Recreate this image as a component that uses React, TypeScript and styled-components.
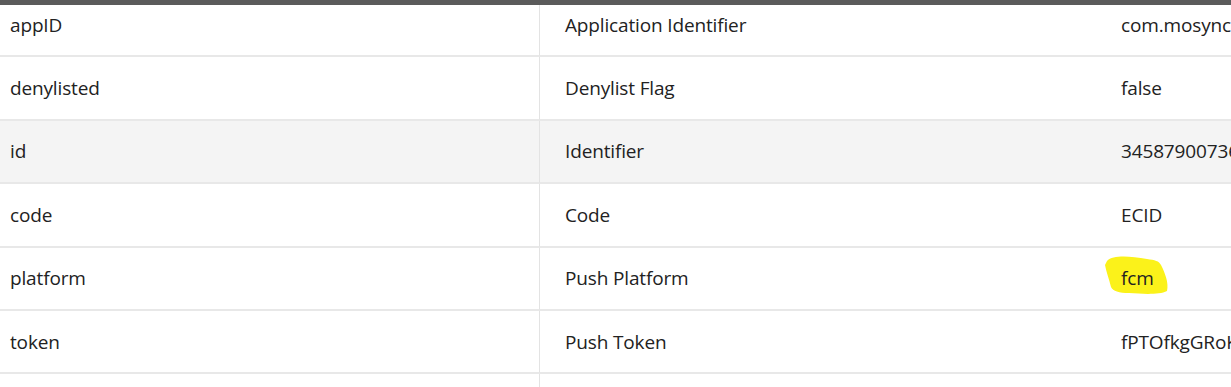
import React from "react";
import styled, { createGlobalStyle } from "styled-components";

const Global = createGlobalStyle`
  html, body {
    margin: 0;
    padding: 0;
    background: #fff;
  }
  body {
    font-family: "Open Sans", "Noto Sans", sans-serif;
    color: #222;
  }
`;

const TopBar = styled.div`
  height: 5px;
  background-color: #5b5b5b;
`;

const Viewport = styled.div`
  height: 382px;
  overflow: hidden;
  position: relative;
`;

const Table = styled.div`
  display: grid;
  grid-template-columns: 539px 557px 400px;
  width: 1496px;
  margin-top: -11px;
`;

const Row = styled.div<{ $hover?: boolean }>`
  display: contents;

  & > div {
    background-color: ${(p) => (p.$hover ? "#f4f4f4" : "#fff")};
  }
`;

const Cell = styled.div<{ $first?: boolean; $divider?: boolean }>`
  height: 61.4px;
  display: flex;
  align-items: center;
  padding-left: ${(p) => (p.$first ? "10px" : "25px")};
  border-bottom: 2px solid #e8e8e8;
  border-left: ${(p) => (p.$divider ? "1px solid #e3e3e3" : "none")};
  font-size: 19px;
  white-space: nowrap;
  overflow: hidden;
  box-sizing: content-box;
  letter-spacing: -0.15px;
`;

const Marker = styled.span`
  position: relative;
  display: inline-block;

  svg {
    position: absolute;
    left: -18px;
    top: -12px;
    z-index: 0;
  }

  span {
    position: relative;
    z-index: 1;
  }
`;

const rows: { key: string; label: string; value: React.ReactNode; hover?: boolean }[] = [
  { key: "appID", label: "Application Identifier", value: "com.mosync.app" },
  { key: "denylisted", label: "Denylist Flag", value: "false" },
  { key: "id", label: "Identifier", value: "34587900736512", hover: true },
  { key: "code", label: "Code", value: "ECID" },
  {
    key: "platform",
    label: "Push Platform",
    value: (
      <Marker>
        <svg width="68" height="44" viewBox="0 0 68 44">
          <path
            d="M4 8 C10 2 26 3 44 6 C52 7 56 8 58 12 C62 20 66 30 64 38 C56 42 40 41 26 40 C16 40 10 38 8 34 C6 26 3 18 2 12 Z"
            fill="#fbf21a"
          />
        </svg>
        <span>fcm</span>
      </Marker>
    ),
  },
  { key: "token", label: "Push Token", value: "fPTOfkgGRoKd7Hx" },
  { key: "", label: "", value: "" },
];

export default function App() {
  return (
    <>
      <Global />
      <TopBar />
      <Viewport>
        <Table>
          {rows.map((r, i) => (
            <Row key={i} $hover={r.hover}>
              <Cell $first>{r.key}</Cell>
              <Cell $divider>{r.label}</Cell>
              <Cell>{r.value}</Cell>
            </Row>
          ))}
        </Table>
      </Viewport>
    </>
  );
}
